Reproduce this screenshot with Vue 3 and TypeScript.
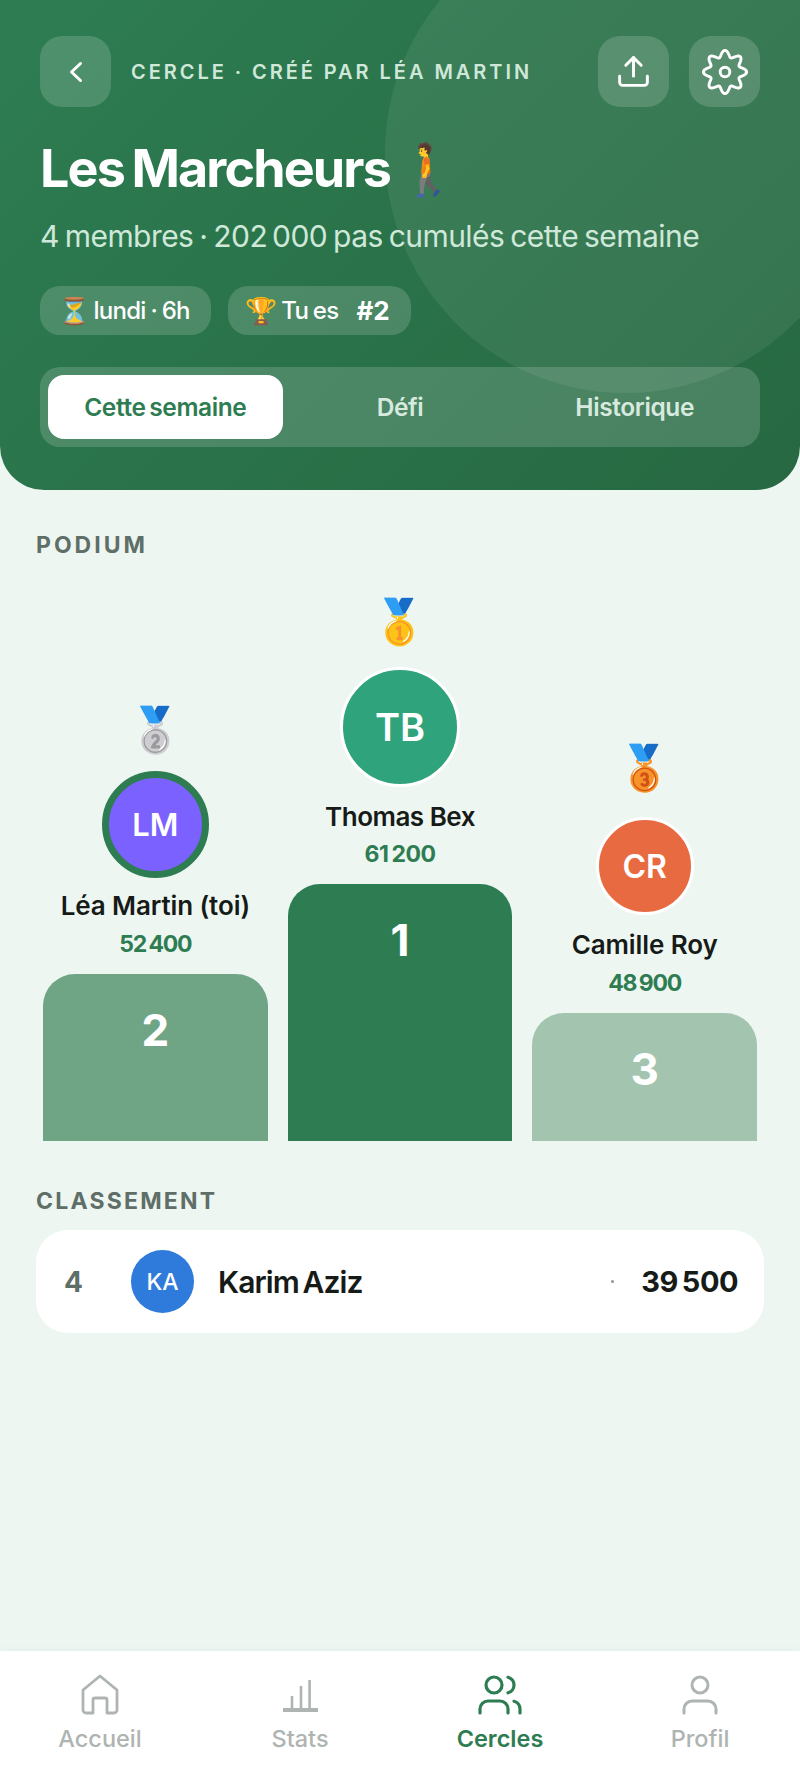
<script setup lang="ts">
interface Podium { key: string; medal: string; initials: string; name: string; score: string; rank: number }
const podium: Podium[] = [
  { key: 'second', medal: '🥈', initials: 'LM', name: 'Léa Martin (toi)', score: '52\u2009400', rank: 2 },
  { key: 'first', medal: '🥇', initials: 'TB', name: 'Thomas Bex', score: '61\u2009200', rank: 1 },
  { key: 'third', medal: '🥉', initials: 'CR', name: 'Camille Roy', score: '48\u2009900', rank: 3 },
]
const tabs = ['Cette semaine', 'Défi', 'Historique']
const gear = (() => {
  const pts: string[] = []
  for (let i = 0; i < 240; i++) {
    const t = (i / 240) * Math.PI * 2
    const r = 9.2 + 1.6 * Math.cos(8 * t)
    pts.push(`${(12 + r * Math.sin(t)).toFixed(2)} ${(12 - r * Math.cos(t)).toFixed(2)}`)
  }
  return 'M' + pts.join('L') + 'Z'
})()
</script>

<template>
  <div class="app">
    <header class="hero">
      <div class="blob"></div>
      <div class="top">
        <button class="sq">
          <svg width="24" height="24" viewBox="0 0 24 24" fill="none" stroke="#fff" stroke-width="3" stroke-linecap="round" stroke-linejoin="round"><path d="M16.500 3.500 7.500 12l9 8.500" /></svg>
        </button>
        <div class="eyebrow">CERCLE · CRÉÉ PAR LÉA MARTIN</div>
        <button class="sq">
          <svg width="37" height="37" viewBox="0 0 24 24" fill="none" stroke="#fff" stroke-width="1.9" stroke-linecap="round" stroke-linejoin="round"><path d="M21 15v4a2 2 0 0 1-2 2H5a2 2 0 0 1-2-2v-4" /><path d="M17 8l-5-5-5 5" /><path d="M12 3v12" /></svg>
        </button>
        <button class="sq">
          <svg width="48" height="48" viewBox="0 0 24 24" fill="none" stroke="#fff" stroke-width="1.45" stroke-linejoin="round"><path :d="gear" /><circle cx="12" cy="12" r="2.4" /></svg>
        </button>
      </div>
      <h1 class="title">Les Marcheurs <span class="emoji">🚶</span></h1>
      <p class="sub">4 membres · 202&#8201;000 pas cumulés cette semaine</p>
      <div class="chips">
        <span class="chip"><span class="emoji">⏳</span><span>lundi · 6h</span></span>
        <span class="chip"><span class="emoji">🏆</span><span>Tu es</span><b>#2</b></span>
      </div>
      <nav class="tabs">
        <div v-for="(t, i) in tabs" :key="t" class="tab" :class="{ on: i === 0 }">{{ t }}</div>
      </nav>
    </header>

    <main class="main">
      <h2 class="label podium-label">PODIUM</h2>
      <section class="podium">
        <div v-for="p in podium" :key="p.key" class="col" :class="p.key">
          <div class="medal emoji">{{ p.medal }}</div>
          <div class="avatar">{{ p.initials }}</div>
          <div class="name">{{ p.name }}</div>
          <div class="score">{{ p.score }}</div>
          <div class="bar">{{ p.rank }}</div>
        </div>
      </section>
      <h2 class="label rank-label">CLASSEMENT</h2>
      <section class="card">
        <span class="pos">4</span>
        <span class="ka">KA</span>
        <span class="kname">Karim Aziz</span>
        <span class="dot"></span>
        <span class="ksteps">39&#8201;500</span>
      </section>
    </main>

    <footer class="nav">
      <div class="item">
        <svg width="48" height="48" viewBox="0 0 24 24" fill="none" stroke="currentColor" stroke-width="1.4" stroke-linejoin="round"><path d="M3.500 9.500 12 2.500l8.500 7v10a1.500 1.500 0 0 1-1.500 1.500h-3.500v-6.500a1 1 0 0 0-1-1h-5a1 1 0 0 0-1 1V21H5a1.500 1.500 0 0 1-1.500-1.500z" /></svg>
        <span>Accueil</span>
      </div>
      <div class="item">
        <svg width="48" height="48" viewBox="0 0 24 24" fill="none" stroke="currentColor" stroke-width="1.3"><path d="M3.500 19.500h17.500" stroke-width="2" /><path d="M8 19v-6.500M12.500 19v-11.500M16.800 19V4.500" /></svg>
        <span>Stats</span>
      </div>
      <div class="item active">
        <svg width="48" height="48" viewBox="0 0 24 24" fill="none" stroke="currentColor" stroke-width="1.6" stroke-linecap="round"><path d="M16 21v-2a4 4 0 0 0-4-4H6a4 4 0 0 0-4 4v2" /><circle cx="9" cy="7" r="4" /><path d="M22 21v-2a4 4 0 0 0-3-3.870" /><path d="M16 3.130a4 4 0 0 1 0 7.750" /></svg>
        <span>Cercles</span>
      </div>
      <div class="item">
        <svg width="48" height="48" viewBox="0 0 24 24" fill="none" stroke="currentColor" stroke-width="1.5" stroke-linecap="round"><path d="M20 21v-2a4 4 0 0 0-4-4H8a4 4 0 0 0-4 4v2" /><circle cx="12" cy="7" r="4" /></svg>
        <span>Profil</span>
      </div>
    </footer>
  </div>
</template>

<style>
html, body { margin: 0; background: #eef6f1; }
</style>

<style scoped>
.app { width: 800px; height: 1778px; display: flex; flex-direction: column; background: #eef6f1; font-family: Inter, "Noto Sans", sans-serif; overflow: hidden; }
.emoji { font-family: "Noto Color Emoji", Inter, sans-serif; }
.hero { position: relative; overflow: hidden; height: 490px; box-sizing: border-box; padding: 36px 40px 0; background: linear-gradient(135deg, #2e7d52, #266841); border-radius: 0 0 44px 44px; color: #fff; }
.blob { position: absolute; left: 385px; top: -87px; width: 480px; height: 480px; border-radius: 50%; background: rgba(255, 255, 255, .07); }
.top, .title, .sub, .chips, .tabs { position: relative; }
.top { display: flex; align-items: center; gap: 20px; }
.sq { width: 71px; height: 71px; flex: none; padding: 0; border: 0; border-radius: 22px; background: rgba(255, 255, 255, .16); display: flex; align-items: center; justify-content: center; }
.eyebrow { flex: 1; font-size: 20px; font-weight: 600; letter-spacing: 2.95px; color: #cfe8d9; white-space: nowrap; }
.title { margin: 26px 0 0; font-size: 52px; line-height: 72px; font-weight: 700; letter-spacing: -1.85px; word-spacing: -3px; white-space: nowrap; }
.title .emoji { font-size: 50px; font-weight: 400; letter-spacing: 0; }
.sub { margin: 8px 0 0; font-size: 30px; line-height: 44px; letter-spacing: -.55px; word-spacing: -2px; color: #cfe8d9; white-space: nowrap; }
.chips { margin-top: 28px; display: flex; gap: 17px; }
.chip { height: 49px; box-sizing: border-box; padding: 0 21px 0 18px; display: flex; align-items: center; border-radius: 20px; background: rgba(255, 255, 255, .16); font-size: 24px; font-weight: 500; letter-spacing: -.7px; word-spacing: -1px; white-space: nowrap; }
.chip .emoji { font-size: 26px; margin-right: 3px; letter-spacing: 0; }
.chip b { font-size: 26px; font-weight: 700; margin-left: 18px; letter-spacing: 0; }
.tabs { margin-top: 32px; height: 80px; box-sizing: border-box; padding: 8px; display: flex; border-radius: 20px; background: rgba(255, 255, 255, .16); }
.tab { flex: 1; display: flex; align-items: center; justify-content: center; border-radius: 16px; font-size: 24.500px; font-weight: 600; letter-spacing: -.4px; word-spacing: -2px; color: #d8eadf; }
.tab.on { background: #fff; color: #2e7d52; }
.main { flex: 1; padding: 0 36px; }
.label { margin: 0; font-size: 23px; line-height: 30px; font-weight: 700; letter-spacing: 3px; color: #5f6f68; }
.podium-label { margin-top: 40px; }
.podium { height: 581px; margin-top: 0; padding: 0 7px; display: flex; gap: 20px; align-items: flex-end; }
.col { flex: 1; min-width: 0; display: flex; flex-direction: column; align-items: center; }
.medal { height: 49px; font-size: 44px; line-height: 49px; }
.avatar { box-sizing: border-box; border-radius: 50%; display: flex; align-items: center; justify-content: center; color: #fff; font-weight: 600; }
.second .avatar { width: 107px; height: 107px; background: #7b61ff; border: 7px solid #2e7d52; font-size: 31px; margin-top: 16px; }
.first .avatar { width: 120px; height: 120px; background: #2fa37c; border: 3px solid #fff; font-size: 38px; margin-top: 20px; }
.third .avatar { width: 98px; height: 98px; background: #e86a41; border: 3px solid #fff; font-size: 32px; margin-top: 24px; }
.name { margin-top: 12px; font-size: 26px; line-height: 32px; font-weight: 600; letter-spacing: -.1px; color: #161b18; white-space: nowrap; }
.first .name { margin-top: 14px; letter-spacing: -.5px; }
.third .name { margin-top: 14px; }
.score { margin-top: 7px; font-size: 23px; line-height: 30px; font-weight: 700; letter-spacing: -1.2px; color: #2e7d52; }
.first .score { margin-top: 6px; letter-spacing: -.5px; }
.bar { margin-top: 15px; width: 100%; box-sizing: border-box; padding-top: 28px; border-radius: 32px 32px 0 0; text-align: center; color: #fff; font-size: 44px; line-height: 56px; font-weight: 700; background: #2e7d52; }
.second .bar { height: 167px; background: #6fa585; }
.first .bar { height: 257px; }
.third .bar { height: 128px; background: #a3c5af; }
.rank-label { margin-top: 45px; letter-spacing: 2.200px; }
.card { margin-top: 14px; height: 103px; box-sizing: border-box; padding: 0 26px 0 28px; display: flex; align-items: center; background: #fff; border-radius: 32px; }
.pos { width: 67px; font-size: 28px; font-weight: 700; color: #5f6f68; }
.ka { width: 63px; height: 63px; border-radius: 50%; background: #2f7bdb; color: #fff; display: flex; align-items: center; justify-content: center; font-size: 23px; font-weight: 500; }
.kname { flex: 1; margin-left: 24px; font-size: 30px; font-weight: 600; letter-spacing: -.9px; word-spacing: -3px; color: #161b18; }
.dot { width: 3px; height: 3px; border-radius: 50%; background: #8b9a92; }
.ksteps { margin-left: 27px; font-size: 29px; font-weight: 700; letter-spacing: -.5px; color: #161b18; }
.nav { height: 127px; box-sizing: border-box; background: #fff; display: flex; box-shadow: 0 -2px 8px rgba(0, 0, 0, .03); }
.item { flex: 1; display: flex; flex-direction: column; align-items: center; padding-top: 20px; color: #aeb4b1; font-size: 23.500px; font-weight: 500; line-height: 30px; }
.item svg { margin-bottom: 5px; }
.item.active { color: #2e7d52; font-weight: 600; }
</style>
